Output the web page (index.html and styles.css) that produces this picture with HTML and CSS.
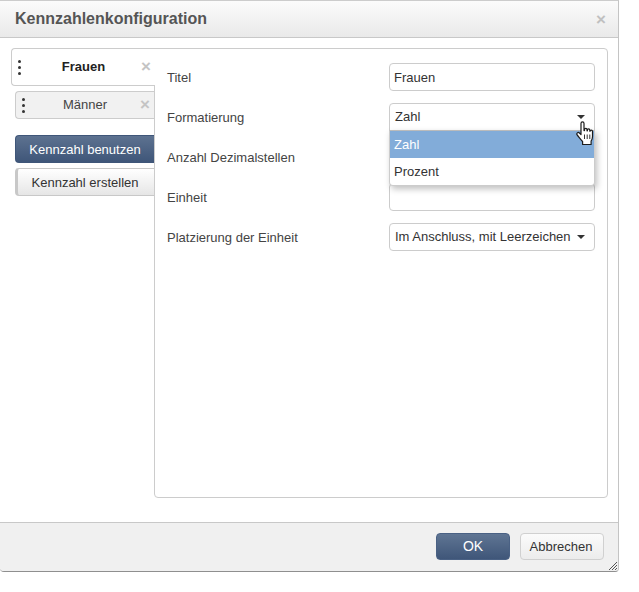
FILE: index.html
```html
<!DOCTYPE html>
<html>
<head>
    <meta name="viewport" content="width=device-width, initial-scale=1.0">
    <title>Kennzahlenkonfiguration</title>
    <link rel="stylesheet" href="styles.css">
</head>
<body>
    <div class="dialog">
        <header class="dialog-head">
            <h1>Kennzahlenkonfiguration</h1>
            <span class="close">&times;</span>
        </header>

        <div class="dialog-body">
            <div class="sidebar">
                <div class="tab tab-active">
                    <span class="grip"><i></i><i></i><i></i></span>
                    <span class="tab-name">Frauen</span>
                    <span class="tab-x">&times;</span>
                </div>
                <div class="tab">
                    <span class="grip"><i></i><i></i><i></i></span>
                    <span class="tab-name">Männer</span>
                    <span class="tab-x">&times;</span>
                </div>
                <button class="side-btn side-primary">Kennzahl benutzen</button>
                <button class="side-btn">Kennzahl erstellen</button>
            </div>

            <div class="panel">
                <div class="row">
                    <label>Titel</label>
                    <div class="field">Frauen</div>
                </div>
                <div class="row">
                    <label>Formatierung</label>
                    <div class="field field-select field-open">
                        <span>Zahl</span><b class="caret"></b>
                        <ul class="menu">
                            <li class="selected">Zahl</li>
                            <li>Prozent</li>
                        </ul>
                        <svg class="hand" width="18" height="25" viewBox="0 0 18 25">
                            <path d="M5 2.4c0-2 3-2 3 0v7.2h.5V8.4c0-1.5 2.5-1.5 2.5 0v1.4h.4V9c0-1.5 2.4-1.5 2.4 0v1.2h.3c0-1.4 2.4-1.4 2.4 .2v5.2c0 2.2-.6 3.4-1.4 4.6v3.3H6.6v-3c-1.4-1.4-3-3.6-5.4-6.5-1.2-1.6.9-3.3 2.2-2l1.6 1.6z" fill="#fff" stroke="#1c1c1c" stroke-width="1.2" stroke-linejoin="round"/>
                            <path d="M8.5 13.5v4.5M11.2 13.5v4.5M13.8 13.5v4.5" stroke="#1c1c1c" stroke-width=".9" fill="none"/>
                        </svg>
                    </div>
                </div>
                <div class="row">
                    <label>Anzahl Dezimalstellen</label>
                    <div class="field"></div>
                </div>
                <div class="row">
                    <label>Einheit</label>
                    <div class="field"></div>
                </div>
                <div class="row">
                    <label>Platzierung der Einheit</label>
                    <div class="field field-select">
                        <span>Im Anschluss, mit Leerzeichen</span><b class="caret"></b>
                    </div>
                </div>
            </div>
        </div>

        <footer class="dialog-foot">
            <button class="btn btn-primary">OK</button>
            <button class="btn">Abbrechen</button>
            <svg class="resize" width="8" height="8" viewBox="0 0 8 8">
                <path d="M0 8L8 0M3 8L8 3M6 8L8 6" stroke="#555" stroke-width="1" fill="none"/>
            </svg>
        </footer>
    </div>
</body>
</html>
```

FILE: styles.css
```css
body {
    font-family: "Liberation Sans", Arial, sans-serif;
    font-size: 13px;
    color: #333;
    margin: 0;
    padding: 0;
    background-color: #fff;
}

.dialog {
    width: 619px;
    height: 572px;
    box-sizing: border-box;
    display: flex;
    flex-direction: column;
    background-color: #fff;
    border-right: 1px solid #c4c4c4;
    border-bottom: 1px solid #8f8f8f;
    border-top: 1px solid #ccc;
    border-radius: 0 0 4px 4px;
}

.dialog-head {
    height: 37px;
    flex: none;
    box-sizing: border-box;
    display: flex;
    align-items: center;
    justify-content: space-between;
    padding: 0 12px 0 15px;
    background: linear-gradient(#fbfbfb, #e9e9e9);
    border-bottom: 1px solid #c8c8c8;
}

.dialog-head h1 {
    margin: 0;
    font-size: 16px;
    font-weight: bold;
    color: #555;
}

.close {
    font-size: 17px;
    font-weight: bold;
    line-height: 17px;
    color: #c0c0c0;
}

.dialog-body {
    flex: 1;
    display: flex;
    padding: 10px 10px 24px 11px;
}

.sidebar {
    width: 143px;
    flex: none;
    position: relative;
    z-index: 1;
}

.tab {
    height: 28px;
    box-sizing: border-box;
    margin-left: 4px;
    margin-bottom: 16px;
    display: flex;
    align-items: center;
    background-color: #f1f1f1;
    border: 1px solid #ccc;
    border-right: none;
    border-radius: 4px 0 0 4px;
    color: #444;
}

.tab-active {
    height: 38px;
    margin-left: 0;
    margin-bottom: 5px;
    width: 144px;
    background-color: #fff;
    color: #222;
    font-weight: bold;
}

.grip {
    width: 3px;
    margin-left: 6px;
    display: flex;
    flex-direction: column;
    gap: 3px;
}

.grip i {
    width: 3px;
    height: 3px;
    border-radius: 50%;
    background-color: #333;
}

.tab-name {
    flex: 1;
    text-align: center;
    padding-left: 5px;
    margin-top: -1px;
}

.tab-x {
    width: 14px;
    flex: none;
    font-size: 17px;
    font-weight: bold;
    color: #c4c4c4;
}

.side-btn {
    display: block;
    width: 139px;
    height: 28px;
    margin: 0 0 5px 4px;
    padding: 0 2px 0 0;
    font-family: inherit;
    font-size: 13px;
    color: #333;
    background: linear-gradient(#fff, #e6e6e6);
    border: 1px solid #c8c8c8;
    border-right: none;
    border-left: 3px solid #c8c8c8;
    border-radius: 4px 0 0 4px;
}

.side-primary {
    padding: 0;
    color: #fff;
    background: linear-gradient(#5d7290, #3f5679);
    border: 1px solid #3f5679;
    border-right: none;
}

.panel {
    flex: 1;
    box-sizing: border-box;
    padding: 14px 12px 0 12px;
    background-color: #fff;
    border: 1px solid #ccc;
    border-radius: 0 4px 4px 4px;
}

.row {
    height: 28px;
    margin-bottom: 12px;
    display: flex;
    align-items: center;
    justify-content: space-between;
}

.row label {
    color: #444;
}

.field {
    width: 206px;
    height: 28px;
    box-sizing: border-box;
    padding: 0 5px 0 4px;
    display: flex;
    align-items: center;
    justify-content: space-between;
    position: relative;
    background-color: #fff;
    border: 1px solid #ccc;
    border-radius: 4px;
    color: #333;
}

.field-select {
    padding-left: 5px;
    padding-right: 9px;
}

.field-select span {
    margin-top: -1px;
}

.field-open {
    border-radius: 4px 4px 0 0;
}

.caret {
    width: 0;
    height: 0;
    border-left: 4px solid transparent;
    border-right: 4px solid transparent;
    border-top: 4px solid #333;
}

.menu {
    position: absolute;
    top: 26px;
    left: -1px;
    width: 206px;
    box-sizing: border-box;
    margin: 0;
    padding: 0;
    list-style: none;
    z-index: 5;
    background-color: #fff;
    border: 1px solid #ccc;
    border-top-color: #bbb;
    border-radius: 0 0 4px 4px;
    box-shadow: 2px 3px 6px rgba(0, 0, 0, 0.25);
}

.menu li {
    height: 27px;
    line-height: 27px;
    padding-left: 4px;
}

.menu .selected {
    background-color: #82acd9;
    color: #fff;
}

.hand {
    position: absolute;
    top: 17px;
    right: 0;
    z-index: 6;
}

.dialog-foot {
    height: 49px;
    flex: none;
    box-sizing: border-box;
    display: flex;
    align-items: center;
    justify-content: flex-end;
    gap: 10px;
    padding: 0 14px 2px 0;
    position: relative;
    background-color: #f0f0f0;
    border-top: 1px solid #c8c8c8;
    border-radius: 0 0 4px 4px;
}

.btn {
    height: 27px;
    padding: 0 2px 0 0;
    width: 84px;
    font-family: inherit;
    font-size: 13px;
    color: #333;
    background: linear-gradient(#fbfbfb, #ececec);
    border: 1px solid #d0d0d0;
    border-radius: 4px;
}

.btn-primary {
    width: 74px;
    padding: 0;
    font-size: 14px;
    color: #fff;
    background: linear-gradient(#5f7593, #3f5679);
    border-color: #4a6184;
}

.resize {
    position: absolute;
    right: 1px;
    bottom: 1px;
}
```
